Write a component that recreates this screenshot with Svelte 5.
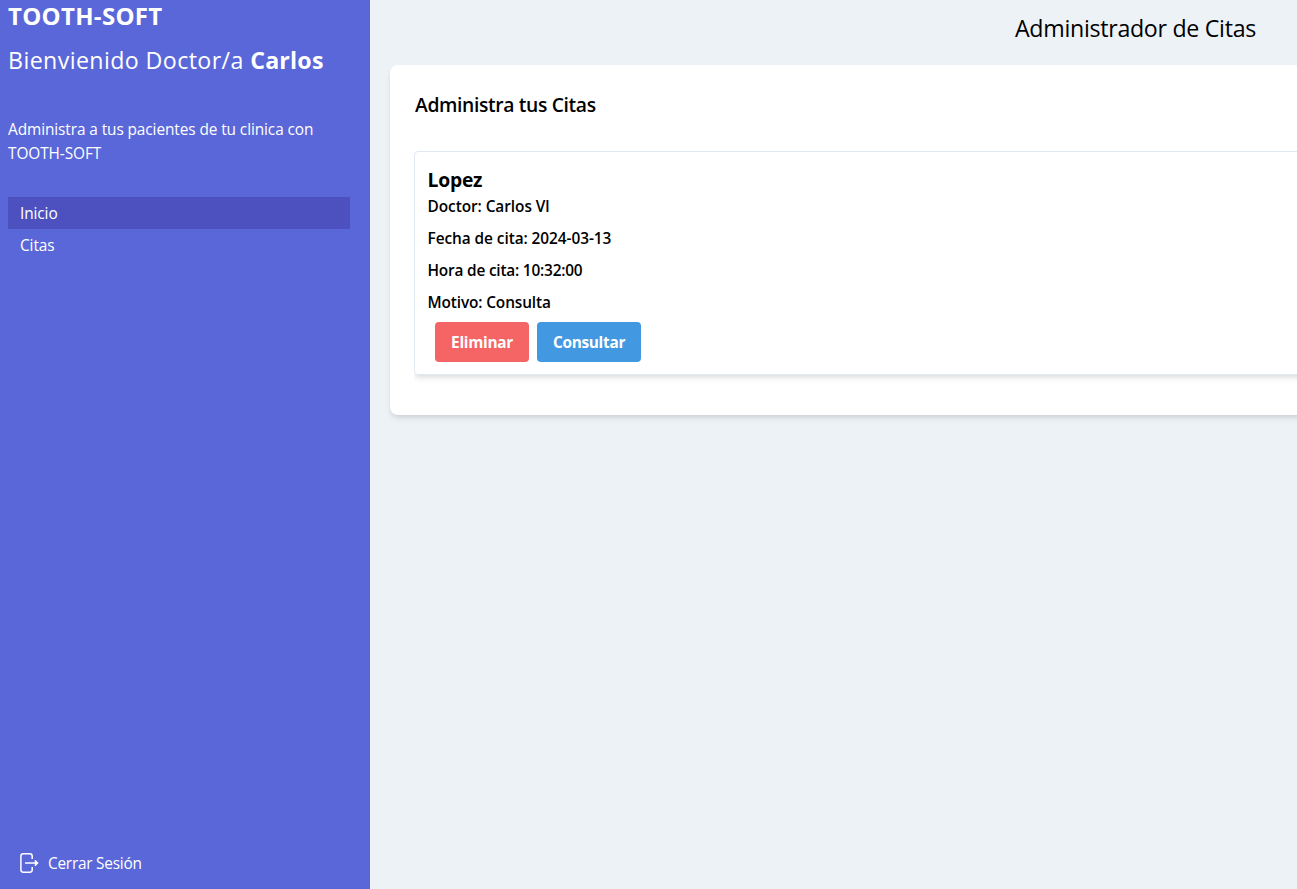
<script>
  const nav = [
    { label: 'Inicio', active: true },
    { label: 'Citas', active: false },
  ];
  const details = [
    { text: 'Doctor: Carlos Vl', id: 'doctor' },
    { text: 'Fecha de cita: 2024-03-13', id: 'date' },
    { text: 'Hora de cita: 10:32:00', id: 'hour' },
    { text: 'Motivo: Consulta', id: 'reason' },
  ];
</script>

<div class="layout">
  <aside>
    <h1>TOOTH-SOFT</h1>
    <p class="welcome">Bienvienido Doctor/a <b>Carlos</b></p>
    <p class="intro">Administra a tus pacientes de tu clinica con<br />TOOTH-SOFT</p>
    <nav>
      {#each nav as item}
        <a class:active={item.active} href="#{item.label}">{item.label}</a>
      {/each}
    </nav>
    <button class="logout">
      <svg width="20" height="22" viewBox="0 0 20 22" fill="none" stroke="currentColor" stroke-width="1.5">
        <path d="M12.2 7V4.2Q12.2 1.8 9.8 1.8H3.3Q.9 1.8 .9 4.2V17.8Q.9 20.2 3.3 20.2H9.8Q12.2 20.2 12.2 17.8V15" />
        <path d="M5 11H17.5" />
        <path d="M15.2 8L18.2 11L15.2 14Z" fill="currentColor" stroke-width=".8" />
      </svg>
      <span>Cerrar Sesión</span>
    </button>
  </aside>

  <main>
    <h2>Administrador de Citas</h2>
    <section class="panel">
      <h3>Administra tus Citas</h3>
      <div class="list">
        <article>
          <h4>Lopez</h4>
          {#each details as d}
            <p class={d.id}>{d.text}</p>
          {/each}
          <div class="actions">
            <button class="delete">Eliminar</button>
            <button class="consult">Consultar</button>
          </div>
        </article>
      </div>
    </section>
  </main>
</div>

<style>
  :global(body) { overflow: hidden; }
  .layout {
    display: flex;
    width: 1297px;
    height: 889px;
    overflow: hidden;
    background: #edf2f7;
    color: #000;
    font: 15.4px/24px "Segoe UI", "Open Sans", "Noto Sans", sans-serif;
    white-space: nowrap;
  }
  .layout * { box-sizing: border-box; }
  h1, h2, h3, h4, p { margin: 0; }
  button { border: 0; font: inherit; color: inherit; }
  aside {
    display: flex;
    flex-direction: column;
    flex: 0 0 370px;
    padding: 0 20px 13px 8px;
    background: #5a67d8;
    color: #fff;
  }
  h1 { font-size: 24px; line-height: 32px; font-weight: 700; letter-spacing: .3px; }
  .welcome { margin-top: 12px; font-size: 23.2px; line-height: 32px; letter-spacing: .4px; }
  .welcome b { font-weight: 700; letter-spacing: .2px; }
  .intro { margin-top: 42px; letter-spacing: -.09px; }
  nav { display: flex; flex-direction: column; margin-top: 31px; }
  nav a { height: 32px; padding: 5px 12px 3px; color: #fff; text-decoration: none; letter-spacing: -.1px; }
  nav a.active { background: #4c51bf; }
  .logout {
    display: flex;
    align-items: center;
    gap: 8px;
    margin-top: auto;
    padding: 0 12px;
    background: none;
    letter-spacing: -.24px;
  }
  .logout svg { margin-bottom: 2px; }
  main { flex: 0 0 1531px; padding: 12px 20px 0; }
  h2 { font-size: 23.2px; line-height: 32px; font-weight: 400; text-align: center; letter-spacing: -.29px; }
  .panel {
    height: 350px;
    margin-top: 21px;
    padding: 24px;
    border-radius: 8px;
    background: #fff;
    box-shadow: 0 4px 6px -1px rgba(0, 0, 0, .1), 0 2px 4px -1px rgba(0, 0, 0, .06);
  }
  h3 { font-size: 19.3px; line-height: 32px; font-weight: 600; padding-left: 1px; letter-spacing: -.35px; }
  .list { margin-top: 30px; height: 240px; overflow: hidden; }
  article {
    height: 224px;
    padding: 15px 12.5px 0;
    border: 1px solid #e2e8f0;
    border-radius: 4px;
    box-shadow: 0 4px 6px -1px rgba(0, 0, 0, .1), 0 2px 4px -1px rgba(0, 0, 0, .06);
  }
  h4 { margin-bottom: 3px; font-size: 19.3px; line-height: 25px; font-weight: 700; letter-spacing: -.2px; }
  article p { margin-bottom: 8px; font-weight: 600; letter-spacing: -.06px; }
  article .hour { letter-spacing: -.2px; }
  article .reason { margin-bottom: 7px; letter-spacing: -.13px; }
  .actions { display: flex; gap: 8px; padding-left: 7.5px; }
  .actions button { height: 40px; padding: 2px 0 0; border-radius: 4px; color: #fff; font-weight: 700; letter-spacing: -.3px; }
  .delete { width: 94px; background: #f56565; }
  .consult { width: 104px; background: #4299e1; }
</style>
